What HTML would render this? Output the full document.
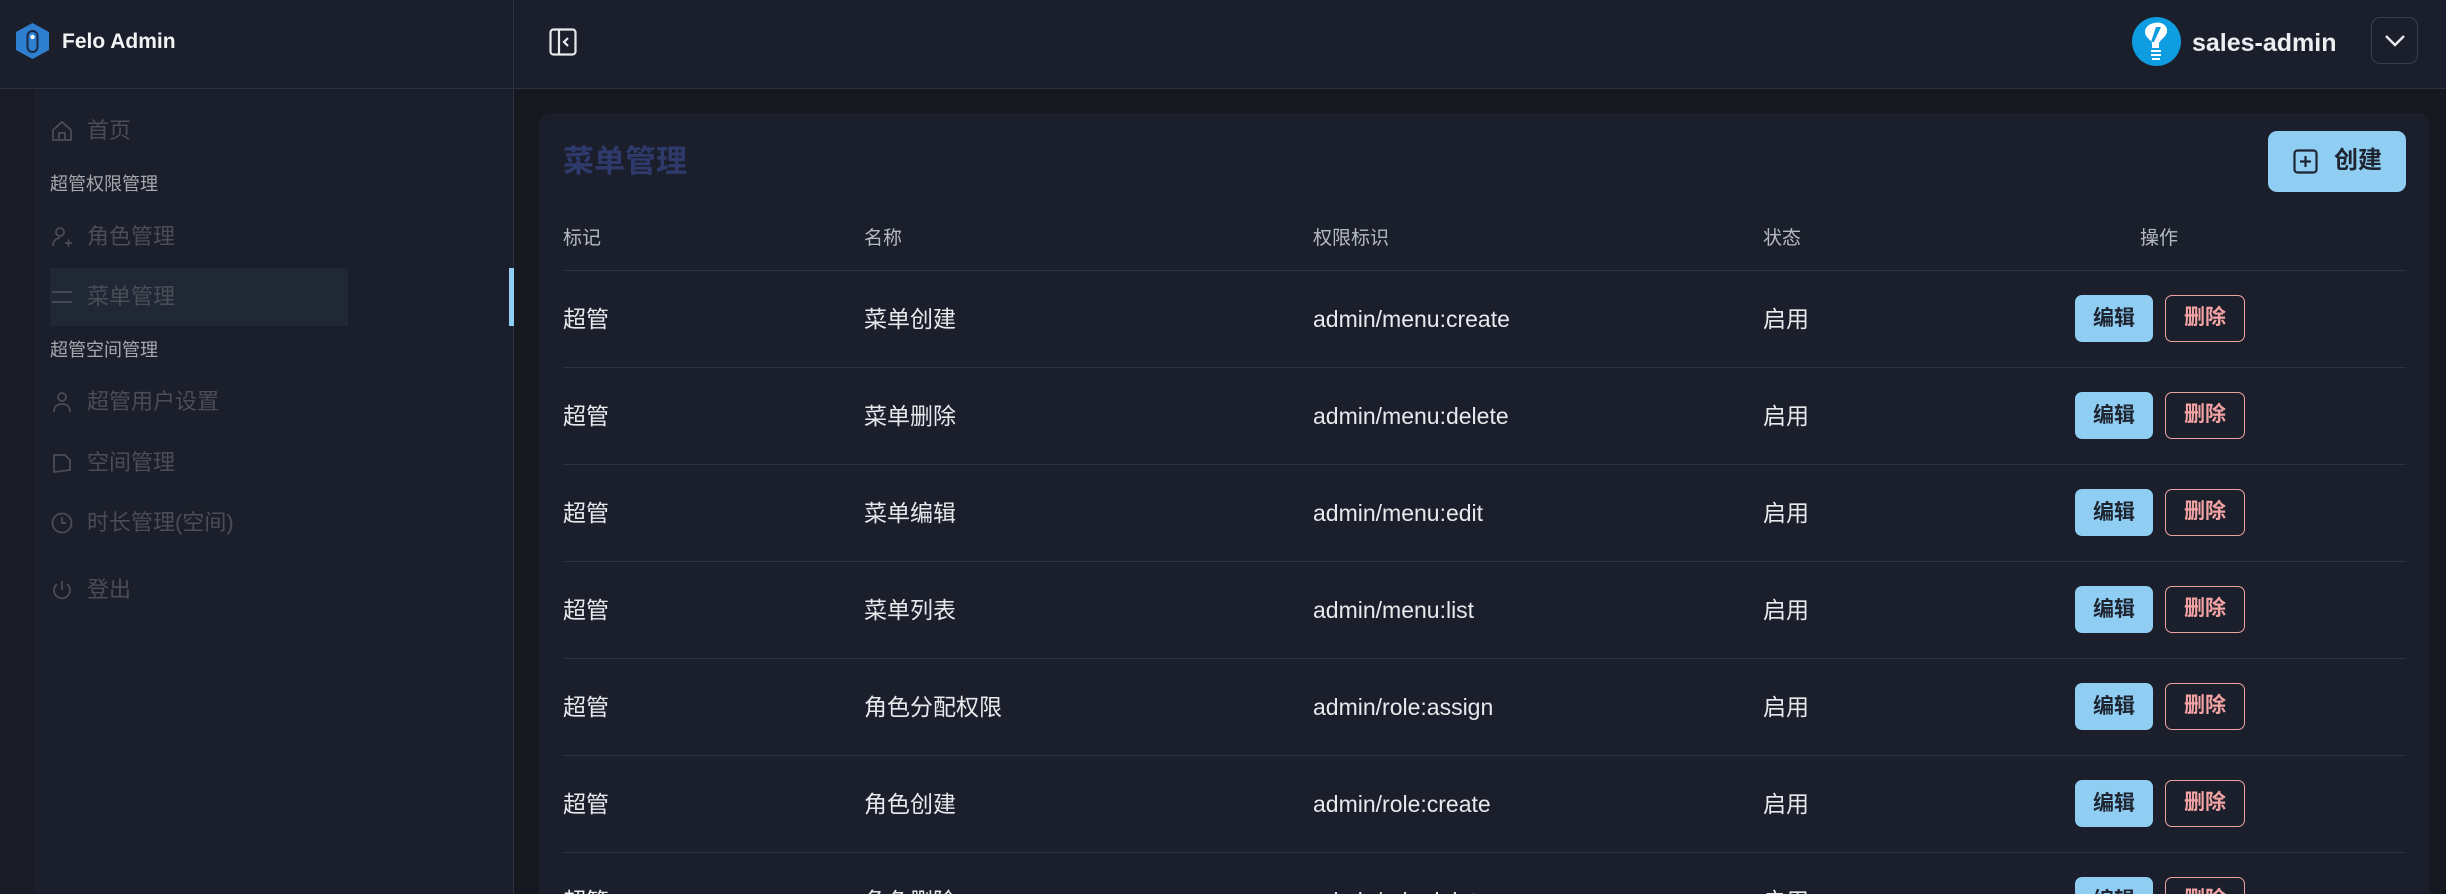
<!DOCTYPE html>
<html><head><meta charset="utf-8"><style>
*{margin:0;padding:0;box-sizing:border-box}
html{width:2446px;height:894px;overflow:hidden}
body{width:2446px;height:894px;overflow:hidden;background:#16181f;font-family:"Liberation Sans","Noto Sans CJK SC",sans-serif;position:relative}
.abs{position:absolute}
#side{left:0;top:0;width:514px;height:894px;background:#1b1f2b;border-right:1px solid #2c3140}
#top{left:514px;top:0;width:1932px;height:89px;background:#1b1f2b}
#hline{left:0;top:88px;width:2446px;height:1px;background:#2c3140}
.mi{position:absolute;left:87px;font-size:22px;color:#4a4d56;line-height:30px}
.sec{position:absolute;left:50px;font-size:18px;color:#a7a9ae;line-height:26px}
.ic{position:absolute;left:50px;width:24px;height:24px}
#card{left:539px;top:113px;width:1891px;height:781px;background:#1b1f2b;border-radius:12px 12px 0 0}
.th{position:absolute;top:226px;font-size:19px;color:#b5b9c2;line-height:26px}
.ln{position:absolute;left:563px;width:1843px;height:1px;background:#2c3242}
.td{position:absolute;font-size:23px;color:#e8e9ec;line-height:30px;white-space:nowrap}
.be{position:absolute;left:2075px;width:78px;height:47px;border-radius:7px;background:#8fcdf3;color:#1e2430;font-size:21px;text-align:center;line-height:47px;font-weight:bold}
.bd{position:absolute;left:2165px;width:80px;height:47px;border-radius:7px;border:1.5px solid #f0a2a2;color:#f3a3a3;font-size:21px;text-align:center;line-height:44px;font-weight:bold}
</style></head><body>
<div id="side" class="abs">
 <div class="abs" style="left:0;top:89px;width:34px;height:805px;background:#191c26"></div>
 <svg class="abs" style="left:14px;top:22px" width="37" height="38" viewBox="0 0 37 38"><path d="M18.5 1 L35 10 V28 L18.5 37 L2 28 V10 Z" fill="#2f7fd0"/><rect x="12.5" y="8" width="12" height="23" rx="6" fill="#1b2a44"/><rect x="14.5" y="10" width="8" height="19" rx="4" fill="#2f7fd0"/><circle cx="18.5" cy="15" r="2.2" fill="#fff"/></svg>
 <div class="abs" style="left:62px;top:27px;font-size:21px;color:#f2f3f5;font-weight:bold;line-height:30px">Felo Admin</div>
 <svg class="ic" style="top:119px" viewBox="0 0 24 24" fill="none" stroke="#4a4d56" stroke-width="1.8"><path d="M3 11 L12 3 L21 11 V21 H3 Z M9 21 V14 H15 V21"/></svg>
 <div class="mi" style="top:116px">首页</div>
 <div class="sec" style="top:171px">超管权限管理</div>
 <svg class="ic" style="top:225px" viewBox="0 0 24 24" fill="none" stroke="#4a4d56" stroke-width="1.8"><circle cx="10" cy="7" r="4"/><path d="M3 21 C3 15 7 13 10 13 M15 18 H22 M18.5 14.5 V21.5"/></svg>
 <div class="mi" style="top:222px">角色管理</div>
 <div class="abs" style="left:50px;top:268px;width:298px;height:58px;background:#202836"></div>
 <svg class="ic" style="top:285px" viewBox="0 0 24 24" fill="none" stroke="#4a4d56" stroke-width="1.8"><path d="M2 7 H22 M2 17 H22"/></svg>
 <div class="mi" style="top:282px">菜单管理</div>
 <div class="abs" style="left:509px;top:268px;width:5px;height:58px;background:#8fcdf3"></div>
 <div class="sec" style="top:337px">超管空间管理</div>
 <svg class="ic" style="top:390px" viewBox="0 0 24 24" fill="none" stroke="#4a4d56" stroke-width="1.8"><circle cx="12" cy="7" r="4"/><path d="M4 22 C4 16 8 14 12 14 C16 14 20 16 20 22"/></svg>
 <div class="mi" style="top:387px">超管用户设置</div>
 <svg class="ic" style="top:451px" viewBox="0 0 24 24" fill="none" stroke="#4a4d56" stroke-width="1.8"><path d="M4 4 H15 L20 9 V19 L4 21 Z"/></svg>
 <div class="mi" style="top:448px">空间管理</div>
 <svg class="ic" style="top:511px" viewBox="0 0 24 24" fill="none" stroke="#4a4d56" stroke-width="1.8"><circle cx="12" cy="12" r="9.5"/><path d="M12 6 V12 H16"/></svg>
 <div class="mi" style="top:508px">时长管理(空间)</div>
 <svg class="ic" style="top:578px" viewBox="0 0 24 24" fill="none" stroke="#4a4d56" stroke-width="1.8"><path d="M12 3 V12 M7 6 A8 8 0 1 0 17 6"/></svg>
 <div class="mi" style="top:575px">登出</div>
</div>
<div id="top" class="abs">
 <svg class="abs" style="left:35px;top:28px" width="28" height="28" viewBox="0 0 28 28" fill="none" stroke="#e8e9ec" stroke-width="2.2"><rect x="1.5" y="1.5" width="25" height="25" rx="3"/><path d="M10 2 V26 M19 10 L15 14 L19 18"/></svg>
 <svg class="abs" style="left:1618px;top:17px" width="49" height="49" viewBox="0 0 49 49"><circle cx="24.5" cy="24.5" r="24.5" fill="#0e9de0"/><path d="M22 6 C30 4 36 9 35 15 C34 20 29 22 27 26 L27 31 H20 L20 26 C18 22 13 20 13 15 C13 10 17 7 22 6 Z" fill="#fff"/><path d="M24 10 L29 10 L22 25 L19 25 Z" fill="#0e9de0"/><rect x="19" y="33" width="10" height="2" fill="#fff"/><rect x="19" y="37" width="10" height="2" fill="#fff"/><rect x="20" y="41" width="8" height="2" fill="#fff"/></svg>
 <div class="abs" style="left:1678px;top:28px;font-size:25px;font-weight:bold;color:#eceef2;line-height:30px">sales-admin</div>
 <div class="abs" style="left:1857px;top:17px;width:47px;height:47px;border:1px solid #3a3f4c;border-radius:9px;background:#1b1f2b"></div>
 <svg class="abs" style="left:1869px;top:32px" width="24" height="16" viewBox="0 0 24 16" fill="none" stroke="#e8e9ec" stroke-width="2.5"><path d="M3 4 L12 13 L21 4"/></svg>
</div>
<div id="hline" class="abs"></div>
<div id="card" class="abs"></div>
<div class="abs" style="left:563px;top:143px;font-size:31px;font-weight:bold;color:#2f3a6c;line-height:38px">菜单管理</div>
<div class="abs" style="left:2268px;top:131px;width:138px;height:61px;border-radius:9px;background:#8fcdf3"></div>
<svg class="abs" style="left:2293px;top:149px" width="25" height="25" viewBox="0 0 25 25" fill="none" stroke="#1e2430" stroke-width="2.2"><rect x="1.5" y="1.5" width="22" height="22" rx="3"/><path d="M12.5 7 V18 M7 12.5 H18"/></svg>
<div class="abs" style="left:2334px;top:146px;font-size:24px;font-weight:bold;color:#1e2430;line-height:30px">创建</div>
<div class="th" style="left:563px">标记</div>
<div class="th" style="left:864px">名称</div>
<div class="th" style="left:1313px">权限标识</div>
<div class="th" style="left:1763px">状态</div>
<div class="th" style="left:2140px">操作</div>
<div class="ln" style="top:270px"></div>
<div class="ln" style="top:367px"></div>
<div class="ln" style="top:464px"></div>
<div class="ln" style="top:561px"></div>
<div class="ln" style="top:658px"></div>
<div class="ln" style="top:755px"></div>
<div class="ln" style="top:852px"></div>

<div class="td" style="left:563px;top:304px">超管</div><div class="td" style="left:864px;top:304px">菜单创建</div><div class="td" style="left:1313px;top:304px">admin/menu:create</div><div class="td" style="left:1763px;top:304px">启用</div><div class="be" style="top:295px">编辑</div><div class="bd" style="top:295px">删除</div>
<div class="td" style="left:563px;top:401px">超管</div><div class="td" style="left:864px;top:401px">菜单删除</div><div class="td" style="left:1313px;top:401px">admin/menu:delete</div><div class="td" style="left:1763px;top:401px">启用</div><div class="be" style="top:392px">编辑</div><div class="bd" style="top:392px">删除</div>
<div class="td" style="left:563px;top:498px">超管</div><div class="td" style="left:864px;top:498px">菜单编辑</div><div class="td" style="left:1313px;top:498px">admin/menu:edit</div><div class="td" style="left:1763px;top:498px">启用</div><div class="be" style="top:489px">编辑</div><div class="bd" style="top:489px">删除</div>
<div class="td" style="left:563px;top:595px">超管</div><div class="td" style="left:864px;top:595px">菜单列表</div><div class="td" style="left:1313px;top:595px">admin/menu:list</div><div class="td" style="left:1763px;top:595px">启用</div><div class="be" style="top:586px">编辑</div><div class="bd" style="top:586px">删除</div>
<div class="td" style="left:563px;top:692px">超管</div><div class="td" style="left:864px;top:692px">角色分配权限</div><div class="td" style="left:1313px;top:692px">admin/role:assign</div><div class="td" style="left:1763px;top:692px">启用</div><div class="be" style="top:683px">编辑</div><div class="bd" style="top:683px">删除</div>
<div class="td" style="left:563px;top:789px">超管</div><div class="td" style="left:864px;top:789px">角色创建</div><div class="td" style="left:1313px;top:789px">admin/role:create</div><div class="td" style="left:1763px;top:789px">启用</div><div class="be" style="top:780px">编辑</div><div class="bd" style="top:780px">删除</div>
<div class="abs" style="left:539px;top:870px;width:1891px;height:24px;overflow:hidden">
<div class="td" style="left:24px;top:16px">超管</div><div class="td" style="left:325px;top:16px">角色删除</div><div class="td" style="left:774px;top:16px">admin/role:delete</div><div class="td" style="left:1224px;top:16px">启用</div><div class="be" style="left:1536px;top:7px">编辑</div><div class="bd" style="left:1626px;top:7px">删除</div>
</div>
</body></html>
